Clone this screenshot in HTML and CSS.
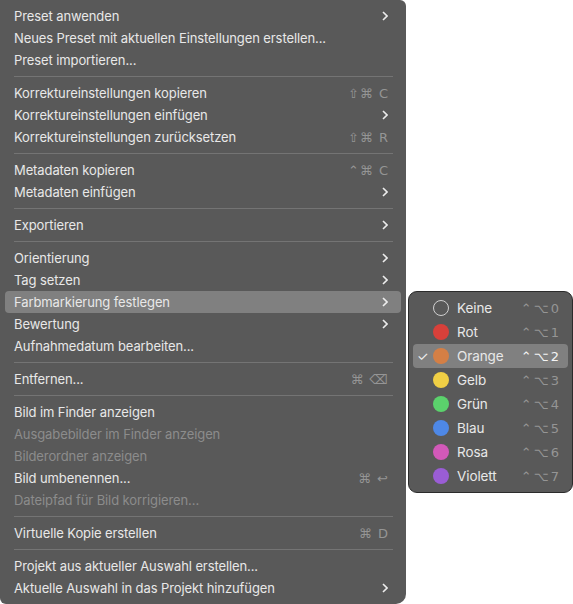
FILE: index.html
```html
<!DOCTYPE html>
<html lang="de">
<head>
  <meta charset="UTF-8" />
  <title>Kontextmenü</title>
  <link rel="stylesheet" href="styles.css">
</head>
<body>
  <div class="screen">
    <div class="menu">
      <div class="item">Preset anwenden<span class="chev"><svg viewBox="0 0 6 10"><polyline points="1,1 5,5 1,9"/></svg></span></div>
      <div class="item">Neues Preset mit aktuellen Einstellungen erstellen...</div>
      <div class="item">Preset importieren...</div>
      <div class="sep"></div>
      <div class="item">Korrektureinstellungen kopieren<span class="keys">⇧⌘ C</span></div>
      <div class="item">Korrektureinstellungen einfügen<span class="chev"><svg viewBox="0 0 6 10"><polyline points="1,1 5,5 1,9"/></svg></span></div>
      <div class="item">Korrektureinstellungen zurücksetzen<span class="keys">⇧⌘ R</span></div>
      <div class="sep"></div>
      <div class="item">Metadaten kopieren<span class="keys">⌃⌘ C</span></div>
      <div class="item">Metadaten einfügen<span class="chev"><svg viewBox="0 0 6 10"><polyline points="1,1 5,5 1,9"/></svg></span></div>
      <div class="sep"></div>
      <div class="item">Exportieren<span class="chev"><svg viewBox="0 0 6 10"><polyline points="1,1 5,5 1,9"/></svg></span></div>
      <div class="sep"></div>
      <div class="item">Orientierung<span class="chev"><svg viewBox="0 0 6 10"><polyline points="1,1 5,5 1,9"/></svg></span></div>
      <div class="item">Tag setzen<span class="chev"><svg viewBox="0 0 6 10"><polyline points="1,1 5,5 1,9"/></svg></span></div>
      <div class="item active">Farbmarkierung festlegen<span class="chev"><svg viewBox="0 0 6 10"><polyline points="1,1 5,5 1,9"/></svg></span></div>
      <div class="item">Bewertung<span class="chev"><svg viewBox="0 0 6 10"><polyline points="1,1 5,5 1,9"/></svg></span></div>
      <div class="item">Aufnahmedatum bearbeiten...</div>
      <div class="sep"></div>
      <div class="item">Entfernen...<span class="keys">⌘ ⌫</span></div>
      <div class="sep"></div>
      <div class="item">Bild im Finder anzeigen</div>
      <div class="item off">Ausgabebilder im Finder anzeigen</div>
      <div class="item off">Bilderordner anzeigen</div>
      <div class="item">Bild umbenennen...<span class="keys">⌘ ↩</span></div>
      <div class="item off">Dateipfad für Bild korrigieren...</div>
      <div class="sep"></div>
      <div class="item">Virtuelle Kopie erstellen<span class="keys">⌘ D</span></div>
      <div class="sep"></div>
      <div class="item">Projekt aus aktueller Auswahl erstellen...</div>
      <div class="item">Aktuelle Auswahl in das Projekt hinzufügen<span class="chev"><svg viewBox="0 0 6 10"><polyline points="1,1 5,5 1,9"/></svg></span></div>
    </div>

    <div class="submenu">
      <div class="label"><span class="check"></span><span class="dot none"></span><span class="name">Keine</span><span class="keys">⌃⌥0</span></div>
      <div class="label"><span class="check"></span><span class="dot red"></span><span class="name">Rot</span><span class="keys">⌃⌥1</span></div>
      <div class="label active"><span class="check">✓</span><span class="dot orange"></span><span class="name">Orange</span><span class="keys">⌃⌥2</span></div>
      <div class="label"><span class="check"></span><span class="dot yellow"></span><span class="name">Gelb</span><span class="keys">⌃⌥3</span></div>
      <div class="label"><span class="check"></span><span class="dot green"></span><span class="name">Grün</span><span class="keys">⌃⌥4</span></div>
      <div class="label"><span class="check"></span><span class="dot blue"></span><span class="name">Blau</span><span class="keys">⌃⌥5</span></div>
      <div class="label"><span class="check"></span><span class="dot pink"></span><span class="name">Rosa</span><span class="keys">⌃⌥6</span></div>
      <div class="label"><span class="check"></span><span class="dot purple"></span><span class="name">Violett</span><span class="keys">⌃⌥7</span></div>
    </div>
  </div>
</body>
</html>
```

FILE: styles.css
```css
body {
  margin: 0;
  background: #ffffff;
  font-family: Inter, "Noto Sans", "DejaVu Sans", sans-serif;
  font-size: 13px;
  letter-spacing: -0.1px;
  color: #e8e8e8;
}
.screen {
  display: flex;
  align-items: flex-start;
  gap: 2px;
}
.menu {
  width: 406px;
  height: 604px;
  box-sizing: border-box;
  padding: 5px 0;
  background: #595959;
  border-radius: 0 6px 10px 6px;
}
.item {
  display: flex;
  align-items: center;
  justify-content: space-between;
  height: 22px;
  margin: 0 5px;
  padding: 0 12px 0 9px;
  border-radius: 4px;
}
.item.active {
  background: #808080;
}
.item.off {
  color: #8c8c8c;
}
.sep {
  height: 1px;
  margin: 5px 13px 5px 14px;
  background: #747474;
}
.keys {
  color: #959595;
  font-family: "DejaVu Sans", sans-serif;
  font-size: 13px;
  letter-spacing: 1px;
}
.chev {
  display: flex;
  margin-right: 1px;
}
.chev svg {
  width: 6px;
  height: 10px;
  fill: none;
  stroke: #ececec;
  stroke-width: 1.6;
}
.submenu {
  width: 165px;
  margin-top: 291px;
  box-sizing: border-box;
  padding: 4px 0;
  background: #595959;
  border: 1px solid #2b2b2b;
  border-radius: 9px;
}
.label {
  display: flex;
  align-items: center;
  height: 24px;
  margin: 0 4px;
  padding: 0 7px 0 4px;
  border-radius: 4px;
}
.label.active {
  background: #808080;
}
.check {
  width: 16px;
  font-size: 13px;
  color: #f0f0f0;
}
.dot {
  width: 16px;
  height: 16px;
  border-radius: 50%;
  box-sizing: border-box;
}
.name {
  flex: 1;
  margin-left: 8px;
  font-size: 13.5px;
}
.label .keys {
  font-size: 13px;
  letter-spacing: 2px;
}
.label.active .keys {
  color: #f4f4f4;
}
.none { border: 1px solid #d0d0d0; }
.red { background: #d8403a; }
.orange { background: #d47f45; }
.yellow { background: #f0cf45; }
.green { background: #5bd26c; }
.blue { background: #4e88e6; }
.pink { background: #d259b9; }
.purple { background: #9a5dd5; }
```
